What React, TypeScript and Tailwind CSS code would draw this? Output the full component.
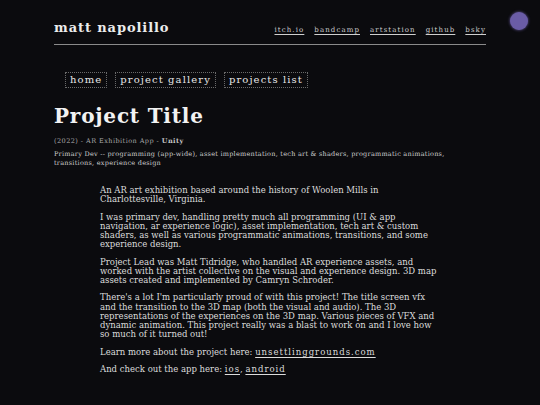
import React from 'react';

const serif = { fontFamily: '"DejaVu Serif", "Liberation Serif", serif' };

const socials = ['itch.io', 'bandcamp', 'artstation', 'github', 'bsky'];
const navItems = ['home', 'project gallery', 'projects list'];

export default function App() {
  return (
    <div className="min-h-[405px] w-[540px] bg-[#0b0b0e] text-[#e4e4e4]" style={serif}>
      <div className="relative px-[54px] pt-[20px]">
        <header className="flex items-end justify-between border-b border-[#8a8a8a] pb-[8px]">
          <div className="text-[13px] font-bold leading-[16px] tracking-[0.9px] text-[#ececec]">matt napolillo</div>
          <nav className="flex gap-[10px] pb-[1px] text-[7px] leading-[10px] tracking-[1.1px] text-[#cfcfcf]">
            {socials.map((s) => (
              <a key={s} className="underline underline-offset-2">{s}</a>
            ))}
          </nav>
        </header>
        <div className="absolute right-[12px] top-[12px] h-[18px] w-[18px] rounded-full bg-[#6a5ca6] shadow-[0_0_3px_#6a5ca6]" />

        <div className="mt-[27px] flex gap-[8px] pl-[11px]">
          {navItems.map((n) => (
            <div key={n} className="border border-dotted border-[#6a6a6a] px-[4px] text-[10px] leading-[14px] tracking-[1.1px] text-[#e8e8e8]">
              {n}
            </div>
          ))}
        </div>

        <h1 className="mt-[16px] text-[20px] font-bold leading-[24px] tracking-[0.8px] text-[#f2f2f2]">Project Title</h1>
        <div className="mt-[9px] text-[6.5px] leading-[9px] tracking-[0.45px] text-[#a8a8a8]">
          (2022) - AR Exhibition App - <span className="font-bold text-[#c8c8c8]">Unity</span>
        </div>
        <div className="mt-[4px] w-[410px] text-[6.5px] leading-[9px] tracking-[0.25px] text-[#d0d0d0]">
          Primary Dev -- programming (app-wide), asset implementation, tech art &amp; shaders, programmatic animations,
          transitions, experience design
        </div>

        <div className="mt-[18px] ml-[46px] flex w-[343px] flex-col gap-[8px] text-[8.5px] leading-[9.25px] text-[#dcdcdc]">
          <p>An AR art exhibition based around the history of Woolen Mills in Charlottesville, Virginia.</p>
          <p>
            I was primary dev, handling pretty much all programming (UI &amp; app navigation, ar experience logic), asset
            implementation, tech art &amp; custom shaders, as well as various programmatic animations, transitions, and some
            experience design.
          </p>
          <p>
            Project Lead was Matt Tidridge, who handled AR experience assets, and worked with the artist collective on the
            visual and experience design. 3D map assets created and implemented by Camryn Schroder.
          </p>
          <p>
            There's a lot I'm particularly proud of with this project! The title screen vfx and the transition to the 3D map
            (both the visual and audio). The 3D representations of the experiences on the 3D map. Various pieces of VFX and
            dynamic animation. This project really was a blast to work on and I love how so much of it turned out!
          </p>
          <p>
            Learn more about the project here:{' '}
            <a className="tracking-[1px] underline underline-offset-2">unsettlinggrounds.com</a>
          </p>
          <p>
            And check out the app here: <a className="tracking-[1px] underline underline-offset-2">ios</a>,{' '}
            <a className="tracking-[1px] underline underline-offset-2">android</a>
          </p>
        </div>
      </div>
    </div>
  );
}
